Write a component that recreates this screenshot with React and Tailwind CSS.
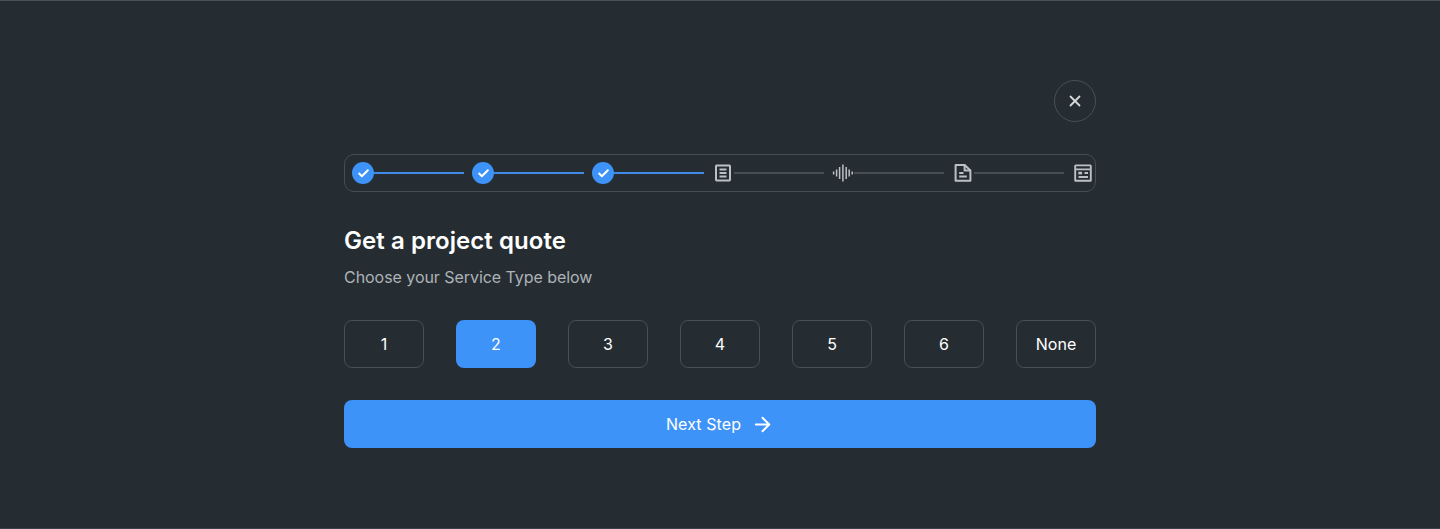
import { Check, X, ArrowRight } from "lucide-react";

const numbers = ["1", "2", "3", "4", "5", "6", "None"];

function CheckStep() {
  return (
    <div className="flex h-[22px] w-[22px] items-center justify-center rounded-full bg-[#3e93f8]">
      <Check size={13} strokeWidth={3.6} className="text-white" />
    </div>
  );
}

function LinesIcon() {
  return (
    <svg width="22" height="22" viewBox="0 0 22 22" fill="none" stroke="#bcc0c3" strokeWidth="2">
      <rect x="4" y="3.6" width="14" height="14.8" rx="0.6" />
      <path d="M7.5 7.5h7M7.5 11h7M7.5 14.5h7" />
    </svg>
  );
}

function WaveIcon() {
  return (
    <svg width="22" height="22" viewBox="0 0 22 22" fill="none" stroke="#bcc0c3" strokeWidth="1.5">
      <path d="M1.6 9.5v3M4.6 7.5v7M7.6 5v12M10.9 2.5v17M14.2 5v12M17.2 7.5v7M20.2 9.5v3" />
    </svg>
  );
}

function DocIcon() {
  return (
    <svg width="22" height="22" viewBox="0 0 22 22" fill="none" stroke="#bcc0c3" strokeWidth="2">
      <path d="M3.6 3h9v5.4h5.8v10.4H3.6z" strokeLinejoin="round" />
      <path d="M12.6 3l5.8 5.4M7.2 11h4.3M7.2 14.6h7.6" />
    </svg>
  );
}

function CardIcon() {
  return (
    <svg width="22" height="22" viewBox="0 0 22 22" fill="none" stroke="#bcc0c3" strokeWidth="1.9">
      <rect x="3.2" y="3.4" width="15.6" height="15.4" rx="0.6" />
      <path d="M3.5 7.4h15M12.5 11h3.5M6.5 15h9.5" />
      <rect x="6.3" y="9.8" width="3.8" height="2.6" fill="#bcc0c3" stroke="none" />
    </svg>
  );
}

const steps = [
  { icon: <CheckStep />, line: "bg-[#3e8ae6]" },
  { icon: <CheckStep />, line: "bg-[#3e8ae6]" },
  { icon: <CheckStep />, line: "bg-[#3e8ae6]" },
  { icon: <LinesIcon />, line: "bg-[#474e54]" },
  { icon: <WaveIcon />, line: "bg-[#474e54]" },
  { icon: <DocIcon />, line: "bg-[#474e54]" },
];

export default function App() {
  return (
    <div className="flex h-[529px] flex-col items-center border-y border-t-[#4a5157] border-b-[#3a4248] bg-[#252d33] pt-[79px] font-['Inter',sans-serif]">
      <div className="flex w-[752px] flex-col">
        <button className="flex h-[42px] w-[42px] items-center justify-center self-end rounded-full border border-[#465056]">
          <X size={18} strokeWidth={2.4} className="text-[#d5d8da]" />
        </button>

        <div className="mt-8 flex h-[38px] items-center rounded-[10px] border border-[#454e54] pl-[7px]">
          {steps.map((step, i) => (
            <div key={i} className="flex items-center">
              {step.icon}
              <div className={`mr-2 h-0.5 w-[90px] ${step.line}`} />
            </div>
          ))}
          <CardIcon />
        </div>

        <h1 className="mt-[33px] text-2xl leading-8 font-semibold tracking-[0.06px] text-white">Get a project quote</h1>
        <p className="mt-[8px] text-base leading-6 tracking-[-0.05px] text-[#aeb3b7]">Choose your Service Type below</p>

        <div className="mt-[31px] flex justify-between">
          {numbers.map((n) => (
            <button
              key={n}
              className={
                n === "2"
                  ? "h-12 w-20 rounded-lg bg-[#3e93f8] text-base text-white"
                  : "h-12 w-20 rounded-lg border border-[#465056] text-base text-white"
              }
            >
              {n}
            </button>
          ))}
        </div>

        <button className="mt-8 flex h-12 items-center justify-center gap-[10px] rounded-lg bg-[#3e93f8] text-base tracking-[0.1px] text-white">
          Next Step
          <ArrowRight size={23} strokeWidth={2} />
        </button>
      </div>
    </div>
  );
}
